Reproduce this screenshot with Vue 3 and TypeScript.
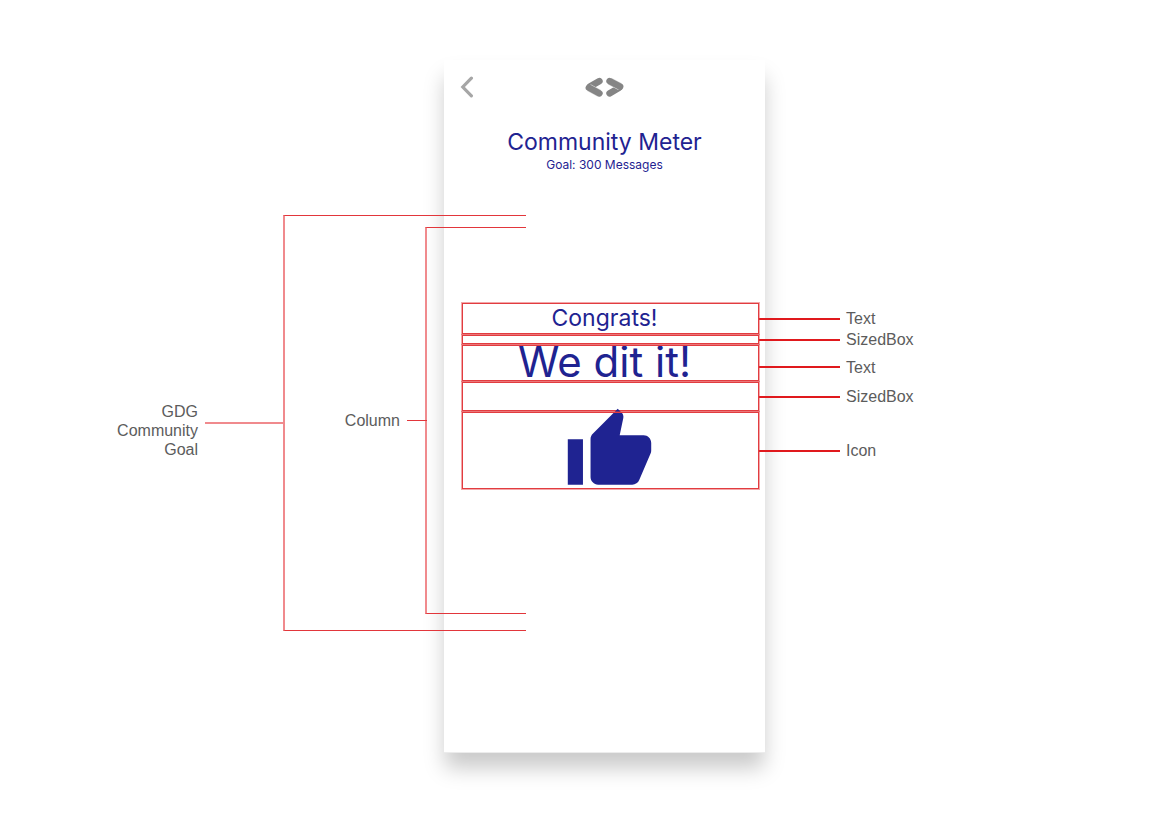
<script setup lang="ts">
type Kind = 'congrats' | 'gap-small' | 'headline' | 'gap-large' | 'icon'

interface Row {
  kind: Kind
  label: string
  text?: string
}

const rows: Row[] = [
  { kind: 'congrats', label: 'Text', text: 'Congrats!' },
  { kind: 'gap-small', label: 'SizedBox' },
  { kind: 'headline', label: 'Text', text: 'We dit it!' },
  { kind: 'gap-large', label: 'SizedBox' },
  { kind: 'icon', label: 'Icon' },
]
</script>

<template>
  <main class="diagram">
    <section class="phone">
      <header class="bar">
        <button class="back" type="button" aria-label="Back">
          <svg width="14" height="22" viewBox="0 0 14 22" aria-hidden="true">
            <path d="M11.4 2.2 2.8 11l8.6 8.8" fill="none" stroke="#a6a6a6" stroke-width="3.2" stroke-linecap="round" />
          </svg>
        </button>
        <svg class="logo" width="40" height="22" viewBox="0 0 40 22" aria-hidden="true">
          <g fill="none" stroke="#858585" stroke-width="6.6" stroke-linecap="round">
            <path d="M5.2 10.4 14.4 5.1" />
            <path d="M3.9 11.7 14.4 17.3" stroke="#dcdcdc" stroke-width="7.6" stroke-linecap="butt" />
            <path d="M3.9 11.7 14.4 17.3" />
            <path d="M33.8 12 24.6 17.3" />
            <path d="M35.1 10.7 24.6 5.1" stroke="#dcdcdc" stroke-width="7.6" stroke-linecap="butt" />
            <path d="M35.1 10.7 24.6 5.1" />
          </g>
        </svg>
      </header>

      <h1 class="title">Community Meter</h1>
      <p class="goal">Goal: 300 Messages</p>

      <div class="rows">
        <div v-for="(row, i) in rows" :key="i" class="row" :class="row.kind">
          <span v-if="row.text">{{ row.text }}</span>
          <svg v-if="row.kind === 'icon'" class="thumb" width="91" height="91" viewBox="0 0 24 24" aria-hidden="true">
            <path
              fill="#1f2391"
              d="M1 21h4V9H1v12zm22-11c0-1.1-.9-2-2-2h-6.31l.95-4.57.03-.32c0-.41-.17-.79-.44-1.06L14.17 1 7.59 7.59C7.22 7.95 7 8.45 7 9v10c0 1.1.9 2 2 2h9c.83 0 1.54-.5 1.84-1.22l3.02-7.05c.09-.23.14-.47.14-.73v-2z"
            />
          </svg>
          <div class="callout">{{ row.label }}</div>
        </div>
      </div>

      <div class="bracket outer">
        <div class="note">GDG<br />Community<br />Goal</div>
      </div>
      <div class="bracket inner">
        <div class="note">Column</div>
      </div>
    </section>
  </main>
</template>

<style>
body {
  margin: 0;
  background: #fff;
}
</style>

<style scoped>
.diagram {
  display: grid;
  grid-template-columns: 444fr 321px 386fr;
  box-sizing: border-box;
  min-height: 100vh;
  padding: 60px 0;
  align-items: start;
  font: 16px/19px "Liberation Sans", Arial, sans-serif;
  color: #5c5c5c;
}

.phone {
  grid-column: 2;
  position: relative;
  box-sizing: border-box;
  padding-bottom: 263px;
  border-bottom: 1px solid #ececec;
  background: #fff;
  box-shadow: 0 16px 20px -1px rgba(0, 0, 0, 0.21);
  color: #1f2391;
  font-family: Inter, "Open Sans", sans-serif;
}

.bar {
  display: grid;
  grid-template-columns: 1fr auto 1fr;
  align-items: center;
  height: 54px;
  padding: 0 16px;
}

.back {
  display: flex;
  justify-self: start;
  padding: 0;
  border: 0;
  background: none;
}

.logo {
  display: block;
}

.title {
  margin: 13px 0 0;
  font-size: 23px;
  font-weight: 400;
  line-height: 30px;
  text-align: center;
}

.goal {
  margin: 0;
  font-size: 12px;
  line-height: 16px;
  text-align: center;
}

.rows {
  display: flex;
  flex-direction: column;
  gap: 1px;
  margin: 130px 6px 0 18px;
}

.row {
  position: relative;
  display: flex;
  align-items: center;
  justify-content: center;
  box-sizing: border-box;
  padding-right: 12px;
  white-space: nowrap;
}

.row::after {
  content: "";
  position: absolute;
  inset: 0;
  border: 1px solid #e23c40;
  box-shadow: 0 0 0 1px rgba(226, 60, 64, 0.45);
}

.congrats {
  height: 31px;
  font-size: 23px;
}

.gap-small {
  height: 9px;
}

.headline {
  height: 36px;
  padding-bottom: 4px;
  font-size: 42px;
}

.gap-large {
  height: 29px;
}

.icon {
  height: 77px;
}

.thumb {
  flex: none;
  margin-left: 10px;
}

.callout {
  position: absolute;
  left: 100%;
  display: flex;
  align-items: center;
  gap: 6px;
  color: #5c5c5c;
  font: 16px/21px "Liberation Sans", Arial, sans-serif;
}

.headline .callout {
  padding-top: 12px;
}

.callout::before {
  content: "";
  width: 81px;
  height: 2px;
  background: #e0191d;
}

.bracket {
  position: absolute;
  right: 239px;
  display: flex;
  align-items: center;
  box-sizing: border-box;
  border: solid #e2363b;
  border-width: 1px 0 1px 2px;
  border-left-color: #f08a8d;
}

.outer {
  top: 155px;
  width: 243px;
  height: 416px;
}

.inner {
  top: 167px;
  width: 101px;
  height: 387px;
}

.note {
  position: absolute;
  right: 100%;
  color: #5c5c5c;
  font: 16px/19px "Liberation Sans", Arial, sans-serif;
  text-align: right;
}

.bracket::before {
  content: "";
  position: absolute;
  right: 100%;
}

.outer::before {
  width: 80px;
  height: 2px;
  background: #f08a8d;
}

.inner::before {
  width: 20px;
  height: 1px;
  background: #e2363b;
}

.outer .note {
  padding: 14px 87px 0 0;
}

.inner .note {
  padding-right: 27px;
}
</style>
